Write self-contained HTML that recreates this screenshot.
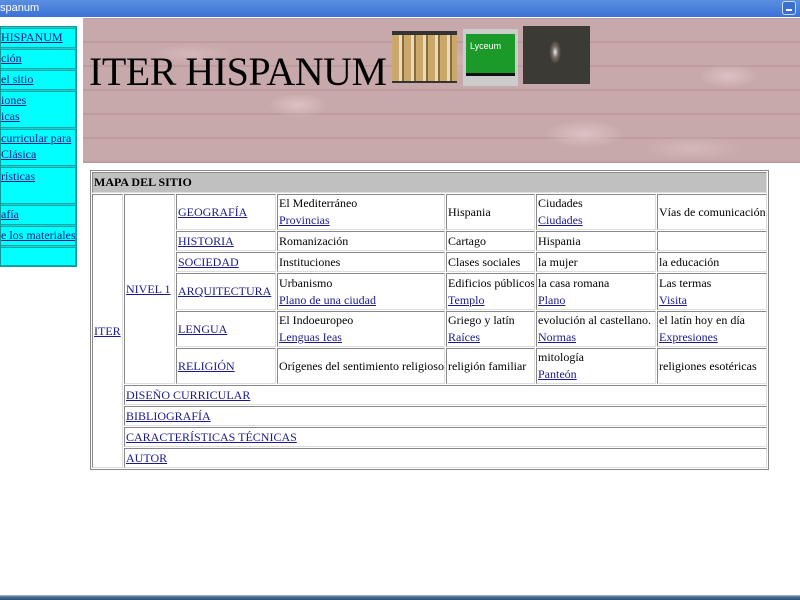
<!DOCTYPE html>
<html><head><meta charset="utf-8">
<style>
*{margin:0;padding:0;box-sizing:border-box}
body{width:800px;height:600px;overflow:hidden;background:#fff;font-family:"Liberation Serif",serif;font-size:12px;position:relative}
a{color:#1a1a8c;text-decoration:underline}
#title{position:absolute;left:0;top:0;width:800px;height:17px;background:linear-gradient(#5b8fe0,#3a72d6);color:#fff;font-family:"Liberation Sans",sans-serif;font-size:11px;line-height:17px}
#min{position:absolute;right:4px;top:1px;width:14px;height:14px;border:1px solid #cde;border-radius:3px;background:#3a6fd0}
#min:after{content:"";position:absolute;left:3px;top:7px;width:6px;height:2px;background:#fff}
#bottom{position:absolute;left:0;top:595px;width:800px;height:5px;background:linear-gradient(#a9c2dc,#4a6d94 40%,#2f4f75)}
#side{position:absolute;left:0;top:26px;width:77px;height:241px;background:#2cc;border:1px solid #199}
.it{position:absolute;left:0;width:75px;background:#0ff;border:1px solid #1aa;border-left:none;font-size:12px;line-height:16px;overflow:hidden;white-space:nowrap}
#ban{position:absolute;left:83px;top:18px;width:717px;height:145px;background:#c8a9ab;overflow:hidden}
#ban h1{position:absolute;left:6px;top:30px;font-weight:normal;font-size:40px;letter-spacing:-0.5px;color:#000;font-family:"Liberation Serif",serif}
table{position:absolute;left:90px;top:170px;width:679px;border-collapse:separate;border-spacing:1px;border:1px solid #888;table-layout:fixed}
td{border:1px solid;border-color:#888 #ddd #ddd #888;padding:0 1px;vertical-align:middle;line-height:17px;overflow:hidden;white-space:nowrap}
td.h{background:#c0c0c0;font-weight:bold;font-size:12px}
</style></head><body>
<div id="title">spanum<div id="min"></div></div>
<div id="side">
<div class="it" style="top:1px;height:20px"><a>HISPANUM</a></div>
<div class="it" style="top:22px;height:20px"><a>ción</a></div>
<div class="it" style="top:43px;height:20px"><a>el sitio</a></div>
<div class="it" style="top:64px;height:37px"><a>iones<br>icas</a></div>
<div class="it" style="top:102px;height:37px"><a>curricular para<br>Clásica</a></div>
<div class="it" style="top:140px;height:37px"><a>rísticas</a></div>
<div class="it" style="top:178px;height:20px"><a>afía</a></div>
<div class="it" style="top:199px;height:20px"><a>e los materiales</a></div>
<div class="it" style="top:220px;height:19px"></div>
</div>
<div id="ban">
<div style="position:absolute;inset:0;background:radial-gradient(ellipse 30px 12px at 30% 60%,#dbc2c3,transparent),radial-gradient(ellipse 40px 14px at 70% 80%,#dbc2c3,transparent),radial-gradient(ellipse 30px 12px at 90% 40%,#dbc2c3,transparent),radial-gradient(ellipse 40px 14px at 50% 30%,#d4b8b9,transparent),radial-gradient(ellipse 40px 10px at 15% 25%,#d4b8b9,transparent),radial-gradient(ellipse 50px 12px at 85% 90%,#d4b8b9,transparent),repeating-linear-gradient(0deg,rgba(110,70,75,.12) 0 2px,transparent 2px 24px)"></div>
<h1>ITER HISPANUM</h1>
<div style="position:absolute;left:309px;top:13px;width:65px;height:52px;background:repeating-linear-gradient(90deg,#c9a86a 0 7px,#e8dcc0 7px 10px,#8a6a3a 10px 12px);border-top:4px solid #333;border-bottom:2px solid #333"></div>
<div style="position:absolute;left:380px;top:11px;width:55px;height:57px;background:#ccc;padding:5px 3px"><div style="width:100%;height:42px;background:#1b9a2a;border-bottom:3px solid #111;color:#fff;font-size:9px;font-family:'Liberation Sans',sans-serif;padding:7px 0 0 4px">Lyceum</div></div>
<div style="position:absolute;left:440px;top:8px;width:67px;height:58px;background:radial-gradient(ellipse 7px 14px at 48% 45%,#eee,#776f66 40%,#3c3a34 85%)"></div>
</div>
<table>
<colgroup><col style="width:31px"><col style="width:51px"><col style="width:100px"><col style="width:168px"><col style="width:89px"><col style="width:120px"><col></colgroup>
<tr style="height:21px"><td class="h" colspan="7">MAPA DEL SITIO</td></tr>
<tr style="height:36px"><td rowspan="10"><a>ITER</a></td><td rowspan="6"><a>NIVEL 1</a></td><td><a>GEOGRAFÍA</a></td><td>El Mediterráneo<br><a>Provincias</a></td><td>Hispania</td><td>Ciudades<br><a>Ciudades</a></td><td>Vías de comunicación</td></tr>
<tr style="height:20px"><td><a>HISTORIA</a></td><td>Romanización</td><td>Cartago</td><td>Hispania</td><td></td></tr>
<tr style="height:20px"><td><a>SOCIEDAD</a></td><td>Instituciones</td><td>Clases sociales</td><td>la mujer</td><td>la educación</td></tr>
<tr style="height:37px"><td><a>ARQUITECTURA</a></td><td>Urbanismo<br><a>Plano de una ciudad</a></td><td>Edificios públicos<br><a>Templo</a></td><td>la casa romana<br><a>Plano</a></td><td>Las termas<br><a>Visita</a></td></tr>
<tr style="height:36px"><td><a>LENGUA</a></td><td>El Indoeuropeo<br><a>Lenguas Ieas</a></td><td>Griego y latín<br><a>Raíces</a></td><td>evolución al castellano.<br><a>Normas</a></td><td>el latín hoy en día<br><a>Expresiones</a></td></tr>
<tr style="height:36px"><td><a>RELIGIÓN</a></td><td>Orígenes del sentimiento religioso</td><td>religión familiar</td><td>mitología<br><a>Panteón</a></td><td>religiones esotéricas</td></tr>
<tr style="height:20px"><td colspan="6"><a>DISEÑO CURRICULAR</a></td></tr>
<tr style="height:20px"><td colspan="6"><a>BIBLIOGRAFÍA</a></td></tr>
<tr style="height:20px"><td colspan="6"><a>CARACTERÍSTICAS TÉCNICAS</a></td></tr>
<tr style="height:20px"><td colspan="6"><a>AUTOR</a></td></tr>
</table>
<div id="bottom"></div>
</body></html>
